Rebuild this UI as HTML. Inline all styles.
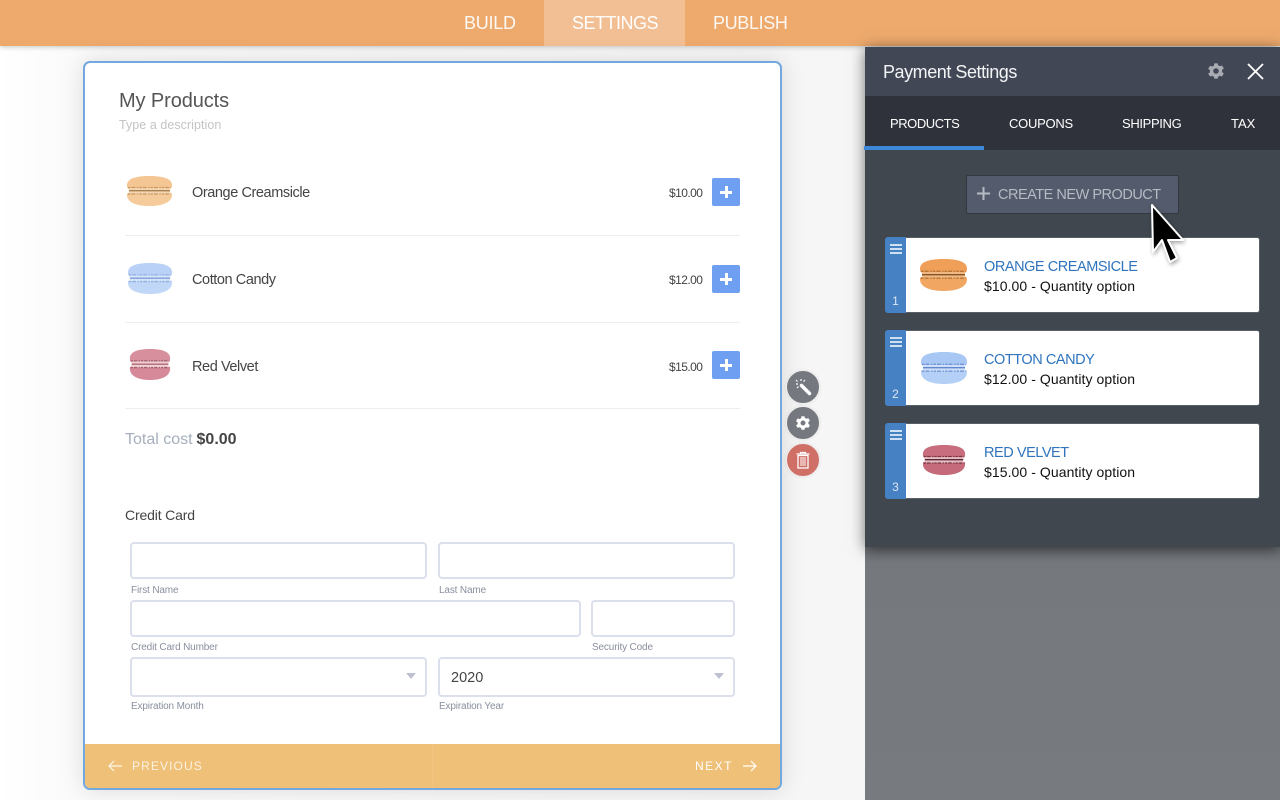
<!DOCTYPE html>
<html><head><meta charset="utf-8"><style>
*{box-sizing:border-box}
html,body{margin:0;padding:0}
body{width:1280px;height:800px;overflow:hidden;position:relative;font-family:"Liberation Sans",sans-serif;background:#fbfbfb}
.a,.t{position:absolute}
.t{white-space:nowrap;line-height:1}
.bgl{left:0;top:46px;width:865px;height:754px;background:linear-gradient(90deg,#fff 0,#fbfbfb 60px,#f6f6f6 800px,#f6f6f6 865px)}
.top{left:0;top:0;width:1280px;height:46px;background:#eeaa6d;box-shadow:0 1px 5px rgba(0,0,0,.22)}
.tab{top:14px;font-size:18px;color:#fff}
.card{left:83px;top:61px;width:699px;height:729px;background:#fff;border:2px solid #72a8de;border-radius:7px;box-shadow:0 0 24px rgba(0,0,0,.13);overflow:hidden}
.hr{left:125px;width:615px;height:1px;background:#eeeeee}
.name{left:192px;font-size:14.5px;color:#444;letter-spacing:-.42px}
.price{left:669px;font-size:12px;color:#444;letter-spacing:-.55px}
.plus{left:712px;width:28px;height:28px;border-radius:2px;background:#6e9ff0}
.plus:before{content:"";position:absolute;left:8px;top:12.5px;width:12px;height:3px;background:#fff}
.plus:after{content:"";position:absolute;left:12.5px;top:8px;width:3px;height:12px;background:#fff}
.in{background:#fff;border:2px solid #dcdfec;border-radius:4px}
.lab{font-size:10px;color:#8a8f9f;letter-spacing:-.15px}
.arr{width:0;height:0;border-left:5px solid transparent;border-right:5px solid transparent;border-top:6px solid #bcc0d1}
.foot{left:85px;top:744px;width:695px;height:44px;background:#efc077;border-radius:0 0 5px 5px}
.rb{left:786px;width:34px;height:34px;border-radius:50%;background:#75787e;border:1px solid #eee;box-shadow:0 0 3px rgba(0,0,0,.08)}
.panel{left:865px;top:47px;width:415px;height:500px;background:#41474f;box-shadow:0 2px 14px rgba(0,0,0,.55)}
.grey{left:865px;top:547px;width:415px;height:253px;background:linear-gradient(180deg,#6a6d72 0,#75797d 15px,#777b7f 100%)}
.ph{left:865px;top:47px;width:415px;height:49px;background:#414754}
.pt{left:865px;top:96px;width:415px;height:54px;background:#2f323b}
.ptab{top:117px;font-size:13px;color:#fff}
.item{left:885px;width:375px;height:76px;background:#fff;border-radius:3px;border:1px solid #5a6068;border-top-color:#5a5f66}
.hand{left:885px;width:21px;height:76px;background:#4681c4;border-radius:3px 0 0 3px}
.hand i{position:absolute;left:5px;width:12px;height:1.5px;background:#cfe0f2}
.hand b{position:absolute;left:0;width:21px;top:57px;text-align:center;font-weight:normal;font-size:12px;line-height:14px;color:#dbe7f4}
.ttl{left:984px;font-size:14.5px;color:#2f74bd;letter-spacing:-.45px}
.sub{left:984px;font-size:14px;color:#111;letter-spacing:.07px}
.o1{--s:#f4c694;--d:#f6cb9c;--f:#f3d5b2;--k:#c9965f;--l:#a8814f}
.b1{--s:#b9d1f6;--d:#c0d7f8;--f:#d5e4fa;--k:#92aee0;--l:#7f9ed6}
.r1{--s:#d88f9d;--d:#d68a99;--f:#f0d0d4;--k:#a45f6d;--l:#b06876}
.o2{--s:#ef9f58;--d:#f1a662;--f:#efb984;--k:#b87639;--l:#8a5224}
.b2{--s:#a9c7f3;--d:#b5d0f6;--f:#cddff9;--k:#7396d8;--l:#6288d0}
.r2{--s:#c76d7d;--d:#c56a7a;--f:#e6bcc2;--k:#7a3542;--l:#5c2a35}
</style></head><body>
<svg width="0" height="0" style="position:absolute"><defs>
<symbol id="mac" viewBox="0 0 48 30" preserveAspectRatio="none">
<path d="M1 9C1 3 9 0 24 0s23 3 23 9c0 3-1 4-3 4H4c-2 0-3-1-3-4z" fill="var(--s)"/>
<path d="M2 17h44c1 0 1 1 1 2 0 7-9 11-23 11S1 26 1 19c0-1 0-2 1-2z" fill="var(--d)"/>
<rect x="3" y="12" width="42" height="6" fill="var(--f)"/>
<path d="M2 11.500h44M2 18h44" stroke="var(--k)" stroke-width="1.300" stroke-dasharray="2.500 1 4 1.500 1.500 1"/>
<path d="M3 14.700h42" stroke="var(--l)" stroke-width="1.300"/>
</symbol>
<symbol id="gear" viewBox="0 0 24 24"><path fill-rule="evenodd" d="M20 13.400c.1-.5.100-.9.100-1.400s0-.9-.1-1.400l2.400-1.900-2.400-4.100-2.900 1.100c-.7-.6-1.500-1-2.400-1.300L14.300 1.800H9.700l-.4 3c-.9.300-1.700.7-2.400 1.300L4 5 1.600 9.100 4 11c-.1.500-.1.900-.1 1.400s0 .9.100 1.400L1.600 15.300 4 19.400l2.900-1.100c.7.600 1.500 1 2.400 1.300l.4 2.600h4.600l.4-2.600c.9-.3 1.700-.7 2.400-1.300l2.900 1.100 2.400-4.100zM12 15.700a3.700 3.700 0 1 1 0-7.400 3.700 3.700 0 0 1 0 7.400z"/></symbol>
</defs></svg>
<div class="a bgl"></div>
<div class="a grey"></div>
<div class="a top"></div>
<div class="a" style="left:544px;top:0;width:141px;height:46px;background:#f2bf94"></div>
<div class="t tab" style="left:464px;opacity:.92;letter-spacing:-.25px">BUILD</div>
<div class="t tab" style="left:572px;letter-spacing:-.5px">SETTINGS</div>
<div class="t tab" style="left:713px;opacity:.92;letter-spacing:-.35px">PUBLISH</div>

<div class="a card"></div>
<div class="t" style="left:119px;top:91px;font-size:20px;color:#555;letter-spacing:-.1px">My Products</div>
<div class="t" style="left:119px;top:119px;font-size:12.5px;color:#c4c4c4;letter-spacing:.05px">Type a description</div>

<svg class="a o1" style="left:126px;top:176px" width="47" height="30"><use href="#mac"/></svg>
<div class="t name" style="top:186px">Orange Creamsicle</div>
<div class="t price" style="top:187px">$10.00</div>
<div class="a plus" style="top:178px"></div>
<div class="a hr" style="top:235px"></div>

<svg class="a b1" style="left:127px;top:263px" width="46" height="31"><use href="#mac"/></svg>
<div class="t name" style="top:273px">Cotton Candy</div>
<div class="t price" style="top:274px">$12.00</div>
<div class="a plus" style="top:265px"></div>
<div class="a hr" style="top:322px"></div>

<svg class="a r1" style="left:129px;top:349px" width="42" height="31"><use href="#mac"/></svg>
<div class="t name" style="top:360px">Red Velvet</div>
<div class="t price" style="top:361px">$15.00</div>
<div class="a plus" style="top:351px"></div>
<div class="a hr" style="top:408px"></div>

<div class="t" style="left:125px;top:432px;font-size:16px;color:#a6afbd">Total cost <b style="color:#444;margin-left:-.5px">$0.00</b></div>
<div class="t" style="left:125px;top:508px;font-size:14px;color:#444;letter-spacing:-.15px">Credit Card</div>

<div class="a in" style="left:130px;top:542px;width:297px;height:37px"></div>
<div class="a in" style="left:438px;top:542px;width:297px;height:37px"></div>
<div class="t lab" style="left:131px;top:586px">First Name</div>
<div class="t lab" style="left:439px;top:586px">Last Name</div>
<div class="a in" style="left:130px;top:600px;width:451px;height:37px"></div>
<div class="a in" style="left:591px;top:600px;width:144px;height:37px"></div>
<div class="t lab" style="left:131px;top:643px">Credit Card Number</div>
<div class="t lab" style="left:592px;top:643px">Security Code</div>
<div class="a in" style="left:130px;top:657px;width:297px;height:40px"></div>
<div class="a in" style="left:438px;top:657px;width:297px;height:40px"></div>
<div class="a arr" style="left:406px;top:673px"></div>
<div class="a arr" style="left:714px;top:673px"></div>
<div class="t" style="left:451px;top:671px;font-size:14.500px;color:#444">2020</div>
<div class="t lab" style="left:131px;top:702px">Expiration Month</div>
<div class="t lab" style="left:439px;top:702px">Expiration Year</div>

<div class="a foot"></div>
<div class="a" style="left:432px;top:744px;width:1px;height:44px;background:#f1c581"></div>
<svg class="a" style="left:106px;top:758px" width="18" height="16" viewBox="0 0 18 16"><path d="M16 8H3M8 3L3 8l5 5" fill="none" stroke="#fff" stroke-width="1.200" opacity=".85"/></svg>
<div class="t" style="left:132px;top:760px;font-size:12px;color:#fff;letter-spacing:1.100px;opacity:.8">PREVIOUS</div>
<div class="t" style="left:695px;top:760px;font-size:12px;color:#fff;letter-spacing:1.500px">NEXT</div>
<svg class="a" style="left:741px;top:758px" width="18" height="16" viewBox="0 0 18 16"><path d="M2 8h13M10 3l5 5-5 5" fill="none" stroke="#fff" stroke-width="1.200"/></svg>

<div class="a rb" style="top:370px"></div>
<svg class="a" style="left:793px;top:377px" width="20" height="20" viewBox="0 0 20 20"><path d="M8.500 8.500l8 8" stroke="#fff" stroke-width="3.500" stroke-linecap="round"/><path d="M3 7h2M8 2v2M3 3l1.500 1.500M12 3l-1.500 1.500M4 11l1.500-1.500" stroke="#fff" stroke-width="1.200"/></svg>
<div class="a rb" style="top:406px"></div>
<svg class="a" style="left:795px;top:415px;fill:#fff" width="16" height="16"><use href="#gear"/></svg>
<div class="a rb" style="top:443px;background:#d06f66"></div>
<svg class="a" style="left:795px;top:451px" width="16" height="18" viewBox="0 0 16 18"><path d="M1.500 3h13M5.500 3V1.500h5V3" fill="none" stroke="#fff" stroke-width="1.200"/><path d="M3 4.500h10V17H3z" fill="none" stroke="#fff" stroke-width="1.300"/><path d="M6 6v9M8 6v9M10 6v9" stroke="#fff" stroke-width="1"/></svg>

<div class="a panel"></div>
<div class="a ph"></div>
<div class="a pt"></div>
<div class="a" style="left:864px;top:146px;width:120px;height:4px;background:#3d88d8"></div>
<div class="t" style="left:883px;top:63px;font-size:18px;color:#f3f4f6;letter-spacing:-.45px">Payment Settings</div>
<svg class="a" style="left:1207px;top:62px;fill:#a8abb1" width="18" height="18"><use href="#gear"/></svg>
<svg class="a" style="left:1246px;top:62px" width="19" height="19" viewBox="0 0 19 19"><path d="M2 2l15 15M17 2L2 17" stroke="#fff" stroke-width="1.800"/></svg>
<div class="t ptab" style="left:890px;letter-spacing:-.45px">PRODUCTS</div>
<div class="t ptab" style="left:1009px;letter-spacing:-.25px">COUPONS</div>
<div class="t ptab" style="left:1122px;letter-spacing:-.35px">SHIPPING</div>
<div class="t ptab" style="left:1231px">TAX</div>

<div class="a" style="left:966px;top:175px;width:213px;height:39px;background:#535b6c;border:1px solid #33383f;border-radius:2px"></div>
<svg class="a" style="left:976px;top:186px" width="15" height="15" viewBox="0 0 15 15"><path d="M7.500 1v13M1 7.500h13" stroke="#b6bac2" stroke-width="2"/></svg>
<div class="t" style="left:998px;top:188px;font-size:14.500px;color:#b6bac2;letter-spacing:-.48px">CREATE NEW PRODUCT</div>

<div class="a item" style="top:237px"></div>
<div class="a hand" style="top:237px"><i style="top:7px"></i><i style="top:11px"></i><i style="top:15px"></i><b>1</b></div>
<svg class="a o2" style="left:919px;top:259px" width="49" height="32"><use href="#mac"/></svg>
<div class="t ttl" style="top:260px">ORANGE CREAMSICLE</div>
<div class="t sub" style="top:279px">$10.00 - Quantity option</div>

<div class="a item" style="top:330px"></div>
<div class="a hand" style="top:330px"><i style="top:7px"></i><i style="top:11px"></i><i style="top:15px"></i><b>2</b></div>
<svg class="a b2" style="left:920px;top:352px" width="48" height="32"><use href="#mac"/></svg>
<div class="t ttl" style="top:353px">COTTON CANDY</div>
<div class="t sub" style="top:372px">$12.00 - Quantity option</div>

<div class="a item" style="top:423px"></div>
<div class="a hand" style="top:423px"><i style="top:7px"></i><i style="top:11px"></i><i style="top:15px"></i><b>3</b></div>
<svg class="a r2" style="left:922px;top:445px" width="44" height="30"><use href="#mac"/></svg>
<div class="t ttl" style="top:446px">RED VELVET</div>
<div class="t sub" style="top:465px">$15.00 - Quantity option</div>

<svg class="a" style="left:1146px;top:200px" width="42" height="68" viewBox="0 0 42 68"><path d="M6 5l1 47 9-12 8 22 7-4-9-18h15z" fill="#000" stroke="#fff" stroke-width="2" stroke-linejoin="round" style="filter:drop-shadow(1px 2px 2px rgba(0,0,0,.35))"/></svg>
</body></html>
